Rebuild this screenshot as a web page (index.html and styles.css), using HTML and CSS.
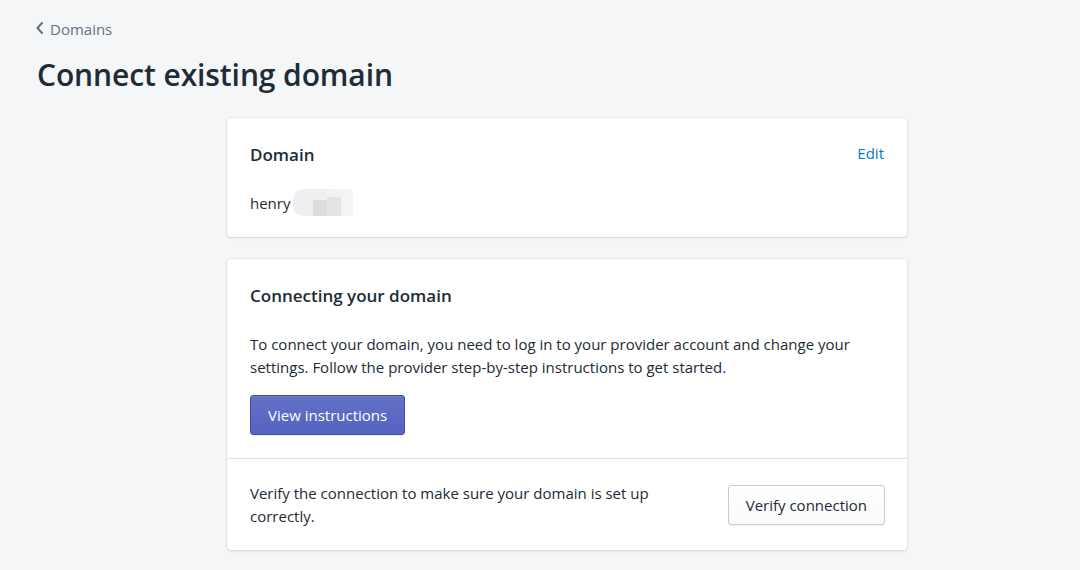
FILE: index.html
```html
<!DOCTYPE html>
<html>
<head>
<meta charset="utf-8">
<link rel="stylesheet" href="styles.css">
</head>
<body>
<div class="page">
  <div class="header">
    <a class="breadcrumb" href="#">
      <svg class="chev" width="10" height="14" viewBox="0 0 10 14"><path d="M7 2 L2.5 7 L7 12" fill="none" stroke="#637381" stroke-width="2" stroke-linecap="round" stroke-linejoin="round"/></svg>
      <span>Domains</span>
    </a>
    <h1 class="title">Connect existing domain</h1>
  </div>
  <div class="layout">
    <div class="card">
      <div class="section">
        <div class="card-head">
          <h2 class="card-title">Domain</h2>
          <a class="link" href="#">Edit</a>
        </div>
        <p class="domain">henry<span class="blur"><span class="b1"></span><span class="b2"></span><span class="b3"></span><span class="b4"></span></span></p>
      </div>
    </div>
    <div class="card">
      <div class="section">
        <h2 class="card-title">Connecting your domain</h2>
        <p class="text">To connect your domain, you need to log in to your provider account and change your settings. Follow the provider step-by-step instructions to get started.</p>
        <button class="btn-primary">View instructions</button>
      </div>
      <div class="section section-split">
        <p class="text verify-text">Verify the connection to make sure your domain is set up correctly.</p>
        <button class="btn">Verify connection</button>
      </div>
    </div>
  </div>
</div>
</body>
</html>
```
FILE: styles.css
```css
* { box-sizing: border-box; }
html, body { margin: 0; padding: 0; }
body {
  background: #f4f6f8;
  font-family: "Open Sans", "Noto Sans", sans-serif;
  color: #212b36;
  width: 1080px;
  height: 570px;
  overflow: hidden;
}
.page { padding: 18px 37px 0 37px; }
.header { display: flex; flex-direction: column; }
.breadcrumb {
  display: flex; align-items: center; gap: 5px;
  color: #637381; text-decoration: none; font-size: 15px;
  height: 22px;
}
.chev { margin-left: -2px; margin-top: -2px; }
.title {
  margin: 17px 0 0 0;
  font-size: 30px; font-weight: 600; line-height: 36px;
  color: #212b36; letter-spacing: -0.1px;
}
.layout {
  width: 680px; margin: 25px 0 0 190px;
  display: flex; flex-direction: column; gap: 22px;
}
.card {
  background: #fff; border-radius: 4px;
  box-shadow: 0 0 0 1px rgba(63,63,68,0.05), 0 1px 3px 0 rgba(63,63,68,0.15);
}
.section { padding: 23px 23px 23px 23px; }
.card:first-child .section { padding-bottom: 21px; }
.section-split {
  border-top: 1px solid #dfe3e8;
  display: flex; align-items: center; justify-content: space-between;
  padding: 23px 22px 22px 23px;
}
.card-head { display: flex; justify-content: space-between; align-items: flex-start; }
.card-title { margin: 2px 0 0 0; font-size: 17px; font-weight: 600; line-height: 24px; }
.link { color: #007ace; text-decoration: none; font-size: 15px; line-height: 22px; margin-top: 1px; }
.domain { margin: 22px 0 0 0; font-size: 15px; line-height: 22px; display: flex; align-items: center; }
.blur { display: inline-flex; height: 27px; margin-left: 3px; }
.blur span { display: block; height: 27px; }
.b1 { width: 20px; background: #eeeef0; border-radius: 10px 0 0 10px; }
.b2 { width: 14px; background: linear-gradient(#eeeef0 40%, #dcdcdf 40%); }
.b3 { width: 14px; background: linear-gradient(#f2f2f3 30%, #e4e4e6 30%); }
.b4 { width: 12px; background: #f4f4f5; }
.text { margin: 25px 0 0 0; font-size: 15px; line-height: 23px; color: #212b36; }
.verify-text { margin: 0; max-width: 420px; }
.btn-primary {
  margin-top: 16px;
  height: 40px; padding: 0 17px;
  background: linear-gradient(#6371c7, #5563c1);
  border: 1px solid #3f4eae; border-radius: 3px;
  box-shadow: inset 0 1px 0 0 #6f7bcb, 0 1px 0 0 rgba(22,29,37,0.05);
  color: #fff; font-family: inherit; font-size: 15px;
}
.btn {
  height: 40px; padding: 0 17px;
  background: linear-gradient(#fff, #f9fafb);
  border: 1px solid #c4cdd5; border-radius: 3px;
  box-shadow: 0 1px 0 0 rgba(22,29,37,0.05);
  color: #212b36; font-family: inherit; font-size: 15px;
}
```
